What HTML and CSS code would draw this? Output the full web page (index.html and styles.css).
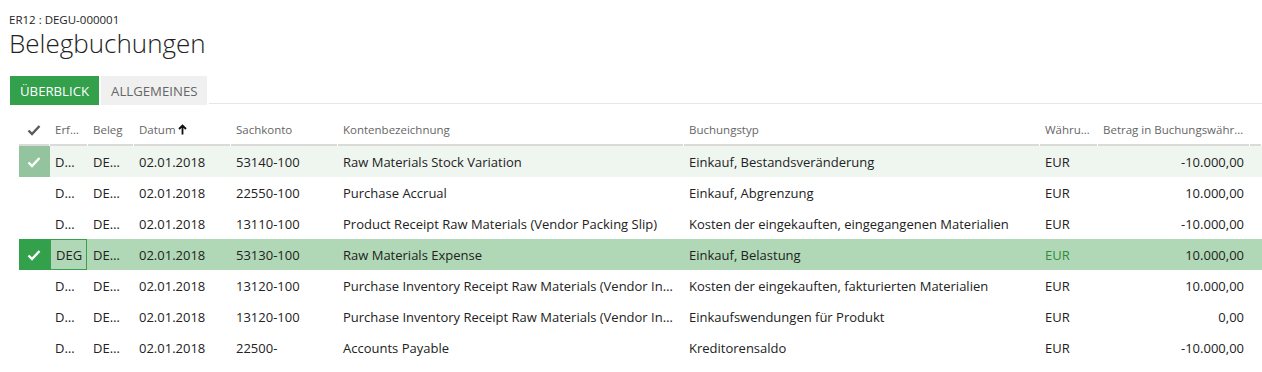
FILE: index.html
```html
<!DOCTYPE html>
<html lang="de">
<head>
<meta charset="utf-8">
<title>Belegbuchungen</title>
<link rel="stylesheet" href="styles.css">
</head>
<body>
<div class="page">
  <div class="caption">ER12 : DEGU-000001</div>
  <h1 class="title">Belegbuchungen</h1>
  <div class="tabs">
    <div class="tab active">ÜBERBLICK</div>
    <div class="tab">ALLGEMEINES</div>
    <div class="tab-rest"></div>
  </div>
  <div class="grid">
    <div class="row head">
      <div class="cell chk"><svg class="chk-ico" width="14" height="12" viewBox="0 0 14 12"><path d="M1.5 6.5 L5 10 L12.5 2" fill="none" stroke="#5a5a5a" stroke-width="2.4"/></svg></div>
      <div class="cell">Erf…</div>
      <div class="cell">Beleg</div>
      <div class="cell">Datum<svg class="sort" width="9" height="11" viewBox="0 0 9 11"><path d="M4.5 10.5 V1.5 M1 5 L4.5 1.5 L8 5" fill="none" stroke="#111" stroke-width="1.8"/></svg></div>
      <div class="cell">Sachkonto</div>
      <div class="cell">Kontenbezeichnung</div>
      <div class="cell">Buchungstyp</div>
      <div class="cell">Währu…</div>
      <div class="cell">Betrag in Buchungswähr…</div>
      <div class="cell filler"></div>
    </div>

    <div class="row marked">
      <div class="cell chk"><svg width="14" height="12" viewBox="0 0 14 12"><path d="M1.5 6.5 L5 10 L12.5 2" fill="none" stroke="#fff" stroke-width="2.4"/></svg></div>
      <div class="cell">D…</div>
      <div class="cell">DE…</div>
      <div class="cell">02.01.2018</div>
      <div class="cell">53140-100</div>
      <div class="cell">Raw Materials Stock Variation</div>
      <div class="cell">Einkauf, Bestandsveränderung</div>
      <div class="cell">EUR</div>
      <div class="cell num">-10.000,00</div>
      <div class="cell filler"></div>
    </div>

    <div class="row">
      <div class="cell chk"></div>
      <div class="cell">D…</div>
      <div class="cell">DE…</div>
      <div class="cell">02.01.2018</div>
      <div class="cell">22550-100</div>
      <div class="cell">Purchase Accrual</div>
      <div class="cell">Einkauf, Abgrenzung</div>
      <div class="cell">EUR</div>
      <div class="cell num">10.000,00</div>
      <div class="cell filler"></div>
    </div>

    <div class="row">
      <div class="cell chk"></div>
      <div class="cell">D…</div>
      <div class="cell">DE…</div>
      <div class="cell">02.01.2018</div>
      <div class="cell">13110-100</div>
      <div class="cell">Product Receipt Raw Materials (Vendor Packing Slip)</div>
      <div class="cell">Kosten der eingekauften, eingegangenen Materialien</div>
      <div class="cell">EUR</div>
      <div class="cell num">-10.000,00</div>
      <div class="cell filler"></div>
    </div>

    <div class="row selected">
      <div class="cell chk"><svg width="14" height="12" viewBox="0 0 14 12"><path d="M1.5 6.5 L5 10 L12.5 2" fill="none" stroke="#fff" stroke-width="2.4"/></svg></div>
      <div class="cell focus">DEG</div>
      <div class="cell">DE…</div>
      <div class="cell">02.01.2018</div>
      <div class="cell">53130-100</div>
      <div class="cell">Raw Materials Expense</div>
      <div class="cell">Einkauf, Belastung</div>
      <div class="cell cur">EUR</div>
      <div class="cell num">10.000,00</div>
      <div class="cell filler"></div>
    </div>

    <div class="row">
      <div class="cell chk"></div>
      <div class="cell">D…</div>
      <div class="cell">DE…</div>
      <div class="cell">02.01.2018</div>
      <div class="cell">13120-100</div>
      <div class="cell">Purchase Inventory Receipt Raw Materials (Vendor In…</div>
      <div class="cell">Kosten der eingekauften, fakturierten Materialien</div>
      <div class="cell">EUR</div>
      <div class="cell num">10.000,00</div>
      <div class="cell filler"></div>
    </div>

    <div class="row">
      <div class="cell chk"></div>
      <div class="cell">D…</div>
      <div class="cell">DE…</div>
      <div class="cell">02.01.2018</div>
      <div class="cell">13120-100</div>
      <div class="cell">Purchase Inventory Receipt Raw Materials (Vendor In…</div>
      <div class="cell">Einkaufswendungen für Produkt</div>
      <div class="cell">EUR</div>
      <div class="cell num">0,00</div>
      <div class="cell filler"></div>
    </div>

    <div class="row">
      <div class="cell chk"></div>
      <div class="cell">D…</div>
      <div class="cell">DE…</div>
      <div class="cell">02.01.2018</div>
      <div class="cell">22500-</div>
      <div class="cell">Accounts Payable</div>
      <div class="cell">Kreditorensaldo</div>
      <div class="cell">EUR</div>
      <div class="cell num">-10.000,00</div>
      <div class="cell filler"></div>
    </div>
  </div>
</div>
</body>
</html>
```
FILE: styles.css
```css
html, body {
  margin: 0;
  padding: 0;
  background: #fff;
}
body {
  font-family: "Open Sans", "Noto Sans", sans-serif;
  color: #222;
  width: 1262px;
  height: 372px;
  overflow: hidden;
}
.page {
  padding-top: 13px;
}
.caption {
  margin-left: 9px;
  font-size: 11.5px;
  line-height: 14px;
  color: #222;
}
.title {
  margin: 0 0 0 9px;
  font-size: 26px;
  line-height: 32px;
  font-weight: 300;
  color: #222;
}
.tabs {
  display: flex;
  margin: 17px 0 0 10px;
  height: 29px;
}
.tab {
  display: flex;
  align-items: center;
  padding: 0 10px;
  background: #f0f0f0;
  color: #666;
  font-size: 13.2px;
  margin-right: 2px;
}
.tab.active {
  background: #33a04b;
  color: #fff;
}
.tab-rest {
  flex: 1;
  border-bottom: 1px solid #e6e6e6;
  margin-bottom: 1px;
}
.grid {
  margin: 10px 0 0 19px;
}
.row {
  display: grid;
  grid-template-columns: 31px 38px 46px 97px 107px 346px 356px 58px 152px 1fr;
  height: 31px;
  font-size: 13px;
}
.cell {
  display: flex;
  align-items: center;
  padding: 0 4px 0 5px;
  white-space: nowrap;
  overflow: hidden;
  min-width: 0;
}
.cell.chk {
  justify-content: center;
  padding: 0 1px 0 0;
}
.cell.num {
  justify-content: flex-end;
  padding-right: 6px;
}
.row.head {
  height: 31px;
  font-size: 11.5px;
  color: #666;
}
.row.head .cell {
  padding-bottom: 2px;
  background: linear-gradient(#dadada, #dadada) left bottom / calc(100% - 1px) 2px no-repeat;
}
.sort {
  margin-left: 2px;
}
.row.marked {
  background: #eff6f0;
}
.row.marked .chk {
  background: #94c49d;
}
.row.selected {
  background: #b1d8b6;
}
.row.selected .chk {
  background: #33a04b;
}
.cell.focus {
  box-shadow: inset 0 0 0 1px #3a9e4f;
  padding-left: 6px;
  margin-right: 1px;
}
.cell.cur {
  color: #2f8a40;
}
```
